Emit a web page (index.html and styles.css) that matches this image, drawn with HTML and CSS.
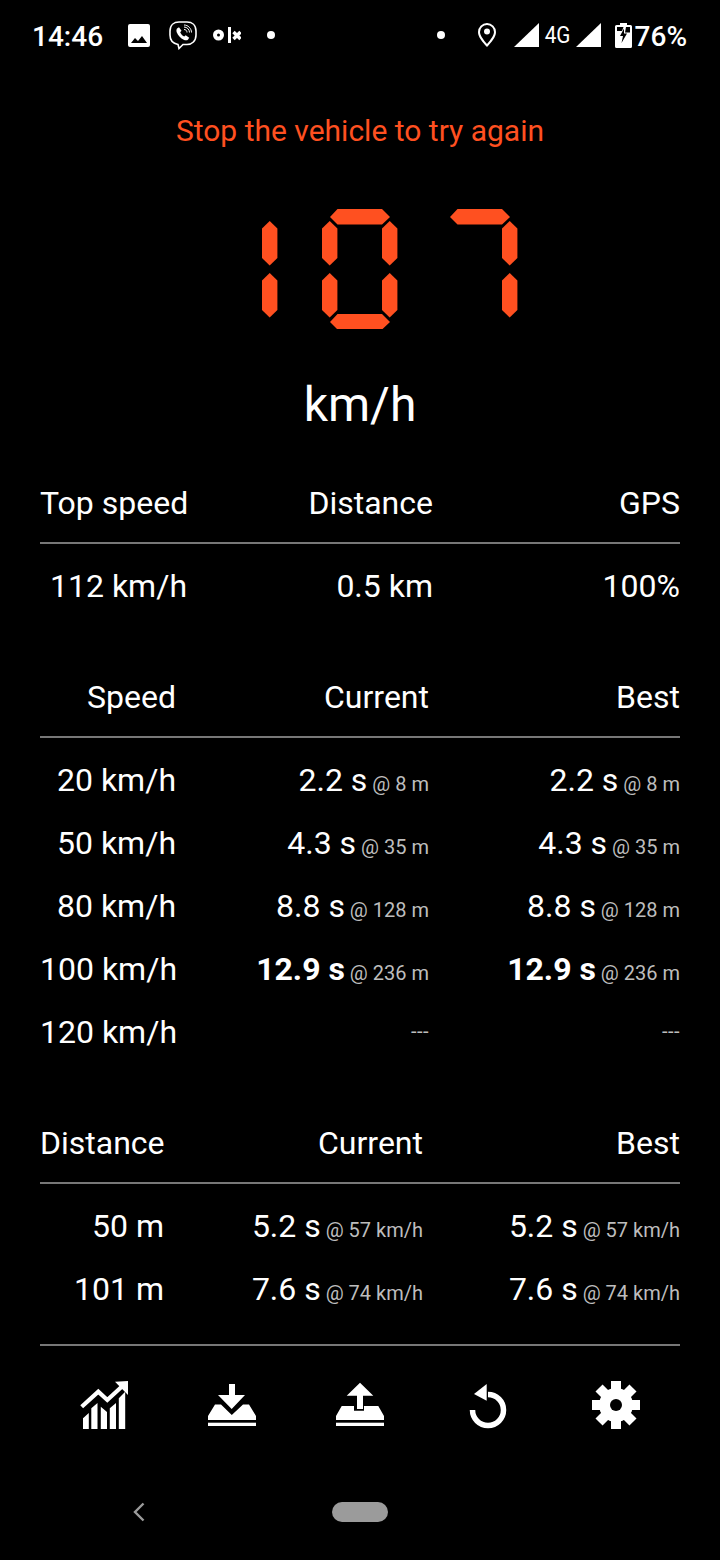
FILE: index.html
```html
<!DOCTYPE html>
<html lang="en">
<head>
  <meta charset="UTF-8" />
  <meta name="viewport" content="width=device-width, initial-scale=1.0"/>
  <title>Speedometer</title>
  <link rel="stylesheet" href="styles.css">
</head>
<body>

  <header class="status-bar">
    <div class="status-left">
      <span class="clock">14:46</span>
      <svg class="ic-image" viewBox="0 0 22 23"><path fill-rule="evenodd" d="M2 0h18a2 2 0 0 1 2 2v19a2 2 0 0 1-2 2H2a2 2 0 0 1-2-2V2a2 2 0 0 1 2-2zM3 19h16l-5-7-4 5-3-3z" fill="#fff"/></svg>
      <svg class="ic-viber" viewBox="0 0 28 29" fill="none" stroke="#fff"><path stroke-width="1.6" d="M9 23.500C4 22.500 1 20 1 14V10C1 4 5 1 10 1h8c5 0 9 3 9 9v4c0 6-4 9.500-9 9.500h-4l-4 4z"/><path fill="#fff" stroke="none" d="M8 7.500l2-1.200 2.500 3.500-1.300 1.500c.8 2 2 3.300 4 4.200l1.500-1.300 3.500 2.500-1.300 2c-1 1-2.700.7-4.200 0-3-1.500-5.500-4-7-7.500-.5-1.500-.2-3 .3-3.700z"/><path stroke-width="1" d="M15 6c3 0 5.500 2.500 5.500 5.500M15 8.500c1.800 0 3 1.200 3 3M15 4c4 0 7.500 3.500 7.500 7.500"/></svg>
      <svg class="ic-olx" viewBox="0 0 28 16"><circle cx="5.500" cy="8" r="3.500" fill="none" stroke="#fff" stroke-width="4"/><rect x="15" y="0" width="3" height="16" fill="#fff"/><path d="M20.500 5l7 7M27.500 5l-7 7" stroke="#fff" stroke-width="3.400"/></svg>
      <span class="dot dot-left"></span>
    </div>
    <div class="status-right">
      <span class="dot"></span>
      <svg class="ic-pin" viewBox="0 0 18 24"><path fill-rule="evenodd" d="M9 0a9 9 0 0 1 9 9c0 5-4.500 10-9 15C4.500 19 0 14 0 9a9 9 0 0 1 9-9zm0 2a7 7 0 0 0-7 7c0 3.500 3.500 8 7 12 3.500-4 7-8.500 7-12a7 7 0 0 0-7-7z" fill="#fff"/><circle cx="9" cy="8.500" r="3" fill="#fff"/></svg>
      <svg class="ic-signal" viewBox="0 0 25 24"><path d="M25 0v24H0z" fill="#fff"/></svg>
      <span class="net">4G</span>
      <svg class="ic-signal" viewBox="0 0 25 24"><path d="M25 0v24H0z" fill="#fff"/></svg>
      <svg class="ic-battery" viewBox="0 0 17 25"><path fill-rule="evenodd" d="M5 0h7v2h3.500a1.500 1.500 0 0 1 1.500 1.500V23.500A1.500 1.500 0 0 1 15.500 25h-14A1.500 1.500 0 0 1 0 23.500V3.500A1.500 1.500 0 0 1 1.500 2H5zM2 4v4h5l1.500-4zM11 4L10 9.500h5V4zM9 5.500L5 13h3L6.500 20 12 10.500H9z" fill="#fff"/></svg>
      <span class="percent">76%</span>
    </div>
  </header>

  <main>
    <p class="message">Stop the vehicle to try again</p>

    <svg class="display" viewBox="0 0 316 120" width="316" height="120">
      <defs>
        <polygon id="seg-v" points="7.700,0 15.400,7.500 15.400,37 7.700,44.500 0,37 0,7.500"/>
        <polygon id="seg-h" points="7.500,0 52,0 60,8 52,15.500 7.500,15.500 0,8"/>
      </defs>
      <use href="#seg-v" x="60" y="12"/>
      <use href="#seg-v" x="60" y="64"/>

      <use href="#seg-h" x="128" y="0"/>
      <use href="#seg-v" x="120" y="12"/>
      <use href="#seg-v" x="180" y="12"/>
      <use href="#seg-v" x="120" y="64"/>
      <use href="#seg-v" x="180" y="64"/>
      <use href="#seg-h" x="128" y="105"/>

      <use href="#seg-h" x="248" y="0"/>
      <use href="#seg-v" x="300" y="12"/>
      <use href="#seg-v" x="300" y="64"/>
    </svg>

    <div class="unit">km/h</div>

    <section class="stats stats-top">
      <div class="row head"><span>Top speed</span><span>Distance</span><span>GPS</span></div>
      <div class="row"><span>112 km/h</span><span>0.5 km</span><span>100%</span></div>
    </section>

    <section class="stats stats-speed">
      <div class="row head"><span>Speed</span><span>Current</span><span>Best</span></div>
      <div class="row"><span>20 km/h</span><span>2.2 s<small> @ 8 m</small></span><span>2.2 s<small> @ 8 m</small></span></div>
      <div class="row"><span>50 km/h</span><span>4.3 s<small> @ 35 m</small></span><span>4.3 s<small> @ 35 m</small></span></div>
      <div class="row"><span>80 km/h</span><span>8.8 s<small> @ 128 m</small></span><span>8.8 s<small> @ 128 m</small></span></div>
      <div class="row"><span>100 km/h</span><span><b>12.9 s</b><small> @ 236 m</small></span><span><b>12.9 s</b><small> @ 236 m</small></span></div>
      <div class="row"><span>120 km/h</span><span><small class="none">---</small></span><span><small class="none">---</small></span></div>
    </section>

    <section class="stats stats-distance">
      <div class="row head"><span>Distance</span><span>Current</span><span>Best</span></div>
      <div class="row"><span>50 m</span><span>5.2 s<small> @ 57 km/h</small></span><span>5.2 s<small> @ 57 km/h</small></span></div>
      <div class="row"><span>101 m</span><span>7.6 s<small> @ 74 km/h</small></span><span>7.6 s<small> @ 74 km/h</small></span></div>
    </section>

    <div class="toolbar">
      <svg viewBox="0 0 48 48" fill="#fff">
        <path d="M1.700 25.700L18.300 10.700 27.300 19 41.700 5.700" fill="none" stroke="#fff" stroke-width="4.200"/>
        <path d="M35 .7L48.300 0 48 14z"/>
        <path d="M3 48V37.300L8.800 32V48zM11.300 48V27.300L17.500 22V48zM20.800 48V25.700L27 31V48zM29.800 48V27.300L36 22V48zM38.800 48V17.300L45.200 10.700V48z"/>
      </svg>
      <svg viewBox="0 0 48 48" fill="#fff">
        <path d="M21 3h6v11h10L23.700 28 10 14h11z"/>
        <path d="M7 23.500h6L23.800 34 35 23.500h6L48 35v4H0v-4z"/>
        <rect y="41.700" width="48" height="3.300"/>
      </svg>
      <svg viewBox="0 0 48 48" fill="#fff">
        <path d="M24 1.700L37.300 14.700H27V28H21V14.700H10.700z"/>
        <path d="M5.700 25H18v4.700H28V25H42.300L48 35v4H0v-4z"/>
        <rect y="41.700" width="48" height="3.300"/>
      </svg>
      <svg viewBox="0 0 48 48">
        <path d="M24 13.500A15.500 15.500 0 1 1 8.500 29" fill="none" stroke="#fff" stroke-width="5.500"/>
        <path d="M22.700 3V19.700L10 13z" fill="#fff"/>
      </svg>
      <svg viewBox="0 0 48 48" fill="#fff">
        <circle cx="24" cy="24" r="17"/>
        <rect x="19" y="0" width="10" height="48"/>
        <rect x="19" y="0" width="10" height="48" transform="rotate(45 24 24)"/>
        <rect x="19" y="0" width="10" height="48" transform="rotate(90 24 24)"/>
        <rect x="19" y="0" width="10" height="48" transform="rotate(135 24 24)"/>
        <circle cx="24" cy="24" r="6" fill="#000"/>
      </svg>
    </div>
  </main>

  <footer class="nav-bar">
    <svg class="nav-back" viewBox="0 0 12 20"><path d="M10.500 1.500L2 10l8.500 8.500" fill="none" stroke="#9b9b9b" stroke-width="2.400"/></svg>
    <span class="nav-home"></span>
  </footer>

</body>
</html>
```

FILE: styles.css
```css
:root {
  --bg: #000000;
  --text: #ffffff;
  --muted: #bdbdbd;
  --rule: #777777;
  --accent: #ff5020;
  --nav: #9b9b9b;
}

* {
  box-sizing: border-box;
  margin: 0;
  padding: 0;
}

body {
  background: var(--bg);
  color: var(--text);
  font-family: Roboto, sans-serif;
  width: 720px;
  height: 1560px;
  overflow: hidden;
}

/* status bar */
.status-bar {
  height: 70px;
  padding: 0 33px;
  display: flex;
  justify-content: space-between;
  align-items: center;
}

.status-left,
.status-right {
  display: flex;
  align-items: center;
}

.clock {
  font-size: 28px;
  font-weight: 500;
  width: 95px;
  margin: 2px 1px 0 -1px;
}

.ic-image { width: 22px; height: 23px; margin-right: 19px; }
.ic-viber { width: 28px; height: 29px; margin-right: 16px; }
.ic-olx { width: 28px; height: 16px; margin-right: 26px; }

.dot {
  width: 8px;
  height: 8px;
  border-radius: 50%;
  background: var(--text);
}

.ic-pin { width: 18px; height: 24px; margin: 0 18px 0 33px; }
.ic-signal { width: 25px; height: 24px; }

.net {
  font-size: 23px;
  width: 37px;
  text-align: center;
  transform: scaleX(0.9);
}

.ic-battery { width: 17px; height: 25px; margin-left: 14px; }

.percent {
  font-size: 28px;
  font-weight: 500;
  margin: 2px 0 0 3px;
}

/* speed readout */
.message {
  margin-top: 41px;
  color: var(--accent);
  font-size: 30px;
  line-height: 40px;
  text-align: center;
}

.display {
  display: block;
  margin: 58px auto 0;
  fill: var(--accent);
}

.unit {
  margin-top: 46px;
  font-size: 48px;
  line-height: 60px;
  text-align: center;
}

/* result tables */
.stats {
  margin: 48px 40px 0;
  font-size: 32px;
}

.stats + .stats {
  margin-top: 59px;
}

.row {
  display: grid;
  height: 63px;
  line-height: 62px;
  text-align: right;
  white-space: nowrap;
}

.row.head {
  height: 61px;
  line-height: 40px;
  margin-bottom: 11px;
  border-bottom: 2px solid var(--rule);
}

.stats-top .row { grid-template-columns: 147px 246px 1fr; }
.stats-speed .row { grid-template-columns: 136px 253px 1fr; }
.stats-distance .row { grid-template-columns: 124px 259px 1fr; }

small {
  font-size: 20px;
  color: var(--muted);
}

small.none {
  position: relative;
  top: -5px;
  letter-spacing: 0.5px;
}

b {
  font-weight: 700;
}

/* bottom actions */
.toolbar {
  margin: 23px 40px 0;
  padding-top: 35px;
  border-top: 2px solid var(--rule);
  display: grid;
  grid-template-columns: repeat(5, 1fr);
  justify-items: center;
}

.toolbar svg {
  width: 48px;
  height: 48px;
}

/* android nav */
.nav-bar {
  margin-top: 73px;
  height: 20px;
  position: relative;
  display: flex;
  justify-content: center;
}

.nav-back {
  position: absolute;
  left: 133px;
  width: 12px;
  height: 20px;
}

.nav-home {
  width: 56px;
  height: 20px;
  border-radius: 10px;
  background: var(--nav);
}
```
